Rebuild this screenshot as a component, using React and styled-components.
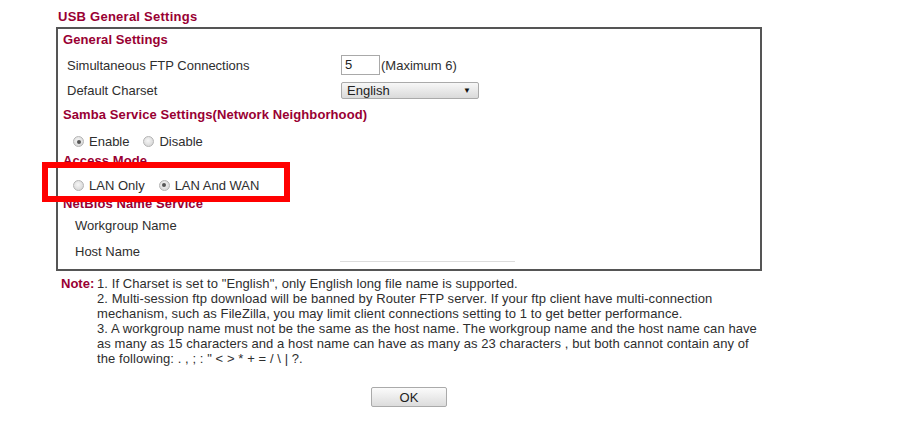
import React from "react";
import styled, { createGlobalStyle } from "styled-components";

const Global = createGlobalStyle`
  html, body { margin: 0; padding: 0; background: #fff; }
  body { font-family: "Liberation Sans", Arial, sans-serif; font-size: 13px; color: #2e2e2e; }
`;

const Page = styled.div`
  position: relative;
  width: 899px;
  height: 445px;
  padding-top: 8px;
  box-sizing: border-box;
`;

const Title = styled.div`
  margin-left: 58px;
  height: 19px;
  line-height: 17px;
  font-size: 13px;
  font-weight: bold;
  letter-spacing: 0.25px;
  color: #990033;
`;

const Box = styled.div`
  margin-left: 56px;
  width: 706px;
  height: 244px;
  box-sizing: border-box;
  border: 2px solid #555;
  display: flex;
  flex-direction: column;
`;

const Heading = styled.div`
  height: ${(p) => p.$h}px;
  line-height: ${(p) => p.$h}px;
  padding-left: 5px;
  font-size: 13px;
  font-weight: bold;
  letter-spacing: 0.1px;
  color: #990033;
  white-space: nowrap;
`;

const Row = styled.div`
  display: grid;
  grid-template-columns: 283px 1fr;
  align-items: center;
  height: ${(p) => p.$h}px;
`;

const Label = styled.div`
  padding-left: ${(p) => p.$indent}px;
  white-space: nowrap;
`;

const Cell = styled.div`
  display: flex;
  align-items: center;
  gap: 1px;
  align-self: ${(p) => (p.$bottom ? "end" : "center")};
`;

const TextInput = styled.div`
  width: 34px;
  height: 18px;
  border: 1px solid #a9a9a9;
  line-height: 18px;
  padding-left: 3px;
  color: #222;
  box-sizing: content-box;
`;

const Select = styled.div`
  width: 138px;
  height: 17px;
  border: 1px solid #aaa;
  border-radius: 2px;
  background: linear-gradient(#f7f7f7, #dadada);
  display: flex;
  align-items: center;
  justify-content: space-between;
  padding: 0 7px 0 5px;
  box-sizing: border-box;
  color: #222;
`;

const Arrow = styled.span`
  font-size: 8px;
  color: #111;
`;

const RadioRow = styled.div`
  height: ${(p) => p.$h}px;
  box-sizing: border-box;
  padding-top: ${(p) => p.$pt || 0}px;
  display: flex;
  align-items: center;
  padding-left: 15px;
`;

const RadioItem = styled.label`
  display: flex;
  align-items: center;
  margin-right: 14px;
`;

const Radio = styled.span`
  width: 9px;
  height: 9px;
  border-radius: 50%;
  border: 1px solid #b4b4b4;
  background: radial-gradient(circle at 45% 40%, #f6f6f6, #cfcfcf);
  margin-right: 5px;
  position: relative;
  &::after {
    content: "";
    display: ${(p) => (p.$checked ? "block" : "none")};
    position: absolute;
    left: 2.5px;
    top: 2.5px;
    width: 4px;
    height: 4px;
    border-radius: 50%;
    background: #555;
  }
`;

const HostLine = styled.div`
  width: 175px;
  margin-left: -1px;
  border-top: 1px solid #dcdcdc;
`;

const Highlight = styled.div`
  position: absolute;
  left: 42px;
  top: 162px;
  width: 248px;
  height: 40px;
  box-sizing: border-box;
  border: 6px solid #ff0000;
`;

const Notes = styled.div`
  margin: 5px 0 0 61px;
  display: grid;
  grid-template-columns: 36px auto;
  line-height: 15px;
  width: 720px;
`;

const NoteLabel = styled.div`
  font-weight: bold;
  color: #990033;
`;

const NoteText = styled.div`
  white-space: nowrap;
  letter-spacing: 0.08px;
`;

const ButtonBar = styled.div`
  width: 706px;
  margin-left: 56px;
  margin-top: 21px;
  display: flex;
  justify-content: center;
`;

const Button = styled.button`
  width: 76px;
  height: 20px;
  border: 1px solid #aaa;
  border-radius: 2px;
  background: linear-gradient(#fbfbfb, #dcdcdc);
  font-family: "Liberation Sans", Arial, sans-serif;
  font-size: 13px;
  color: #222;
  padding: 0;
`;

export default function App() {
  return (
    <>
      <Global />
      <Page>
        <Title>USB General Settings</Title>
        <Box>
          <Heading $h={22}>General Settings</Heading>
          <Row $h={28}>
            <Label $indent={9}>Simultaneous FTP Connections</Label>
            <Cell>
              <TextInput>5</TextInput>
              <span>(Maximum 6)</span>
            </Cell>
          </Row>
          <Row $h={22}>
            <Label $indent={9}>Default Charset</Label>
            <Cell>
              <Select>
                <span>English</span>
                <Arrow>▼</Arrow>
              </Select>
            </Cell>
          </Row>
          <Heading $h={28}>Samba Service Settings(Network Neighborhood)</Heading>
          <RadioRow $h={25}>
            <RadioItem>
              <Radio $checked />
              Enable
            </RadioItem>
            <RadioItem>
              <Radio />
              Disable
            </RadioItem>
          </RadioRow>
          <Heading $h={14}>Access Mode</Heading>
          <RadioRow $h={30} $pt={4}>
            <RadioItem>
              <Radio />
              LAN Only
            </RadioItem>
            <RadioItem>
              <Radio $checked />
              LAN And WAN
            </RadioItem>
          </RadioRow>
          <Heading $h={11}>NetBios Name Service</Heading>
          <Row $h={32}>
            <Label $indent={17}>Workgroup Name</Label>
            <Cell />
          </Row>
          <Row $h={21}>
            <Label $indent={17}>Host Name</Label>
            <Cell $bottom>
              <HostLine />
            </Cell>
          </Row>
        </Box>
        <Notes>
          <NoteLabel>Note:</NoteLabel>
          <NoteText>
            1. If Charset is set to "English", only English long file name is supported.
            <br />
            2. Multi-session ftp download will be banned by Router FTP server. If your ftp client have multi-connection
            <br />
            mechanism, such as FileZilla, you may limit client connections setting to 1 to get better performance.
            <br />
            3. A workgroup name must not be the same as the host name. The workgroup name and the host name can have
            <br />
            as many as 15 characters and a host name can have as many as 23 characters , but both cannot contain any of
            <br />
            the following: . , ; : " &lt; &gt; * + = / \ | ?.
          </NoteText>
        </Notes>
        <ButtonBar>
          <Button>OK</Button>
        </ButtonBar>
        <Highlight />
      </Page>
    </>
  );
}
